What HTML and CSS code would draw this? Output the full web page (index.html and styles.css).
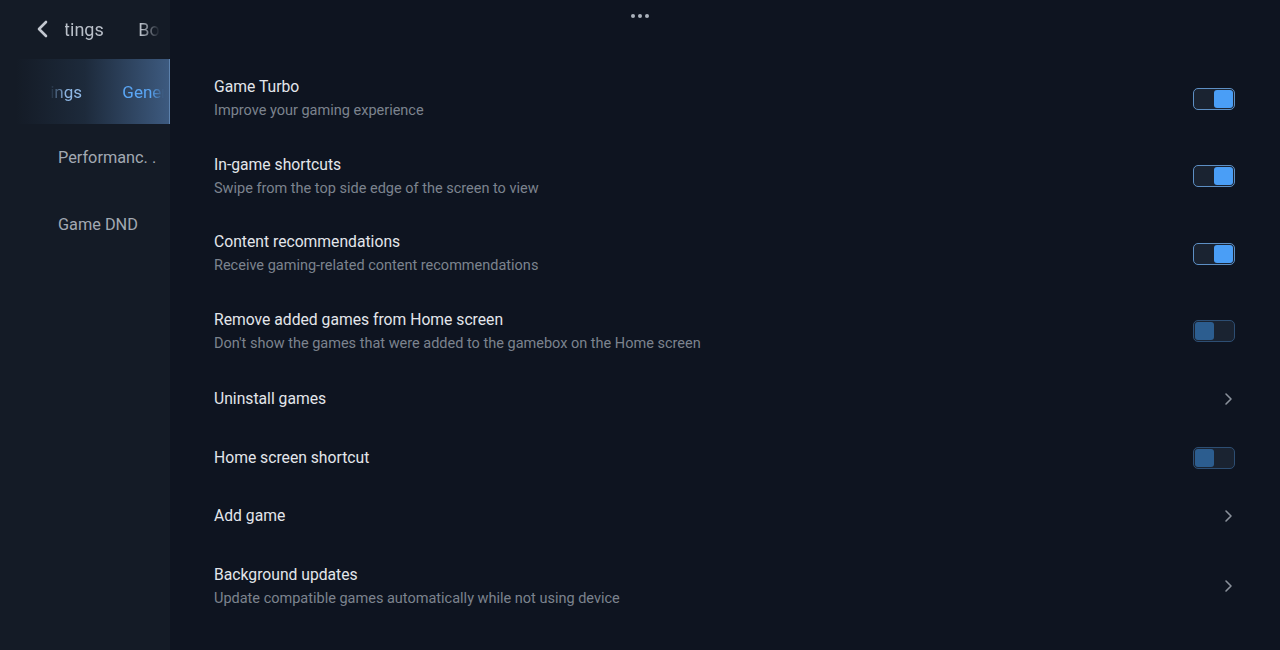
FILE: index.html
```
<!DOCTYPE html>
<html lang="en">
<head>
    <meta charset="UTF-8">
    <meta name="viewport" content="width=device-width, initial-scale=1.0">
    <title>Game Turbo settings</title>
    <link rel="stylesheet" href="styles.css">
</head>
<body>
    <div class="app">
        <aside class="sidebar">
            <div class="sidebar-header">
                <svg class="back-icon" width="14" height="18" viewBox="0 0 14 18">
                    <path d="M11 2 L4 9 L11 16" fill="none" stroke="#c3c8d0" stroke-width="2.6" stroke-linecap="round" stroke-linejoin="round"/>
                </svg>
                <div class="header-title">
                    <span class="header-inner">Settings</span>
                    <span class="header-next">Boost</span>
                </div>
            </div>
            <nav class="nav">
                <div class="nav-item active">
                    <div class="nav-scroll">
                        <span class="nav-prev">Settings</span>
                        <span class="nav-current">General</span>
                    </div>
                </div>
                <div class="nav-item">Performanc. .</div>
                <div class="nav-item">Game DND</div>
            </nav>
        </aside>

        <main class="content">
            <div class="more-dots"><span></span><span></span><span></span></div>

            <div class="row two-line">
                <div class="row-text">
                    <div class="row-title">Game Turbo</div>
                    <div class="row-sub">Improve your gaming experience</div>
                </div>
                <div class="toggle on"><span class="knob"></span></div>
            </div>

            <div class="row two-line">
                <div class="row-text">
                    <div class="row-title">In-game shortcuts</div>
                    <div class="row-sub">Swipe from the top side edge of the screen to view</div>
                </div>
                <div class="toggle on"><span class="knob"></span></div>
            </div>

            <div class="row two-line">
                <div class="row-text">
                    <div class="row-title">Content recommendations</div>
                    <div class="row-sub">Receive gaming-related content recommendations</div>
                </div>
                <div class="toggle on"><span class="knob"></span></div>
            </div>

            <div class="row two-line">
                <div class="row-text">
                    <div class="row-title">Remove added games from Home screen</div>
                    <div class="row-sub">Don't show the games that were added to the gamebox on the Home screen</div>
                </div>
                <div class="toggle"><span class="knob"></span></div>
            </div>

            <div class="row">
                <div class="row-text">
                    <div class="row-title">Uninstall games</div>
                </div>
                <svg class="chevron" width="10" height="14" viewBox="0 0 10 14">
                    <path d="M3 2 L8 7 L3 12" fill="none" stroke="#8a919b" stroke-width="1.6" stroke-linecap="round" stroke-linejoin="round"/>
                </svg>
            </div>

            <div class="row">
                <div class="row-text">
                    <div class="row-title">Home screen shortcut</div>
                </div>
                <div class="toggle"><span class="knob"></span></div>
            </div>

            <div class="row">
                <div class="row-text">
                    <div class="row-title">Add game</div>
                </div>
                <svg class="chevron" width="10" height="14" viewBox="0 0 10 14">
                    <path d="M3 2 L8 7 L3 12" fill="none" stroke="#8a919b" stroke-width="1.6" stroke-linecap="round" stroke-linejoin="round"/>
                </svg>
            </div>

            <div class="row two-line last">
                <div class="row-text">
                    <div class="row-title">Background updates</div>
                    <div class="row-sub">Update compatible games automatically while not using device</div>
                </div>
                <svg class="chevron" width="10" height="14" viewBox="0 0 10 14">
                    <path d="M3 2 L8 7 L3 12" fill="none" stroke="#8a919b" stroke-width="1.6" stroke-linecap="round" stroke-linejoin="round"/>
                </svg>
            </div>
        </main>
    </div>
</body>
</html>
```
FILE: styles.css
```
html, body {
    margin: 0;
    height: 100%;
}
body {
    font-family: Roboto, "Noto Sans", Arial, sans-serif;
    background-color: #0e1420;
    color: #e6e9ee;
    overflow: hidden;
}
.app {
    display: flex;
    height: 650px;
}
.sidebar {
    width: 170px;
    flex-shrink: 0;
    background-color: #141b26;
}
.sidebar-header {
    height: 59px;
    display: flex;
    align-items: center;
    padding-left: 35px;
    box-sizing: border-box;
}
.back-icon {
    display: block;
    margin-top: -1px;
}
.header-title {
    margin-left: 16px;
    width: 95px;
    overflow: hidden;
    white-space: nowrap;
    font-size: 18px;
    color: #b9bfc8;
    -webkit-mask-image: linear-gradient(to right, #000 80%, transparent 100%);
    mask-image: linear-gradient(to right, #000 80%, transparent 100%);
}
.header-inner {
    display: inline-block;
    margin-left: -27px;
}
.header-next {
    display: inline-block;
    margin-left: 30px;
}
.nav-item {
    height: 67px;
    display: flex;
    align-items: center;
    padding-left: 58px;
    font-size: 16.3px;
    color: #a2a9b2;
    white-space: nowrap;
}
.nav-item.active {
    height: 65px;
    margin-left: 16px;
    padding-left: 0;
    background: linear-gradient(to right, #141b26 0%, #1d2a3b 45%, #3d5a7f 100%);
    border-right: 1px solid #5d82ad;
}
.nav-scroll {
    margin-left: 34px;
    width: 114px;
    overflow: hidden;
    font-size: 17px;
    -webkit-mask-image: linear-gradient(to right, transparent 0%, #000 14%, #000 88%, transparent 100%);
    mask-image: linear-gradient(to right, transparent 0%, #000 14%, #000 88%, transparent 100%);
}
.nav-prev {
    display: inline-block;
    margin-left: -30px;
    color: #8fb8e6;
}
.nav-current {
    display: inline-block;
    margin-left: 36px;
    color: #5aa6f5;
}
.content {
    flex: 1;
    position: relative;
    padding: 60px 44px 0 44px;
}
.more-dots {
    position: absolute;
    top: 14px;
    left: 461px;
    display: flex;
    gap: 3px;
}
.more-dots span {
    width: 4px;
    height: 4px;
    border-radius: 50%;
    background-color: #aab1bb;
}
.row {
    height: 58.5px;
    display: flex;
    align-items: center;
    justify-content: space-between;
}
.row.two-line {
    height: 77.5px;
}
.row.last {
    margin-top: 2px;
}
.row-title {
    font-size: 15.7px;
    line-height: 22px;
    color: #e3e6eb;
}
.row-sub {
    font-size: 14.5px;
    line-height: 20px;
    margin-top: 3px;
    color: #7c838e;
}
.toggle {
    width: 38px;
    height: 18px;
    border: 1px solid #2d4e73;
    border-radius: 5px;
    background-color: #1a2331;
    padding: 1px;
    display: flex;
    margin-right: 1px;
}
.toggle .knob {
    width: 19px;
    height: 18px;
    border-radius: 3px;
    background-color: #2c5d8f;
}
.toggle.on {
    border-color: #5d8fc4;
    justify-content: flex-end;
}
.toggle.on .knob {
    background-color: #4a9ef6;
}
.chevron {
    display: block;
    margin-right: 3px;
}
```
